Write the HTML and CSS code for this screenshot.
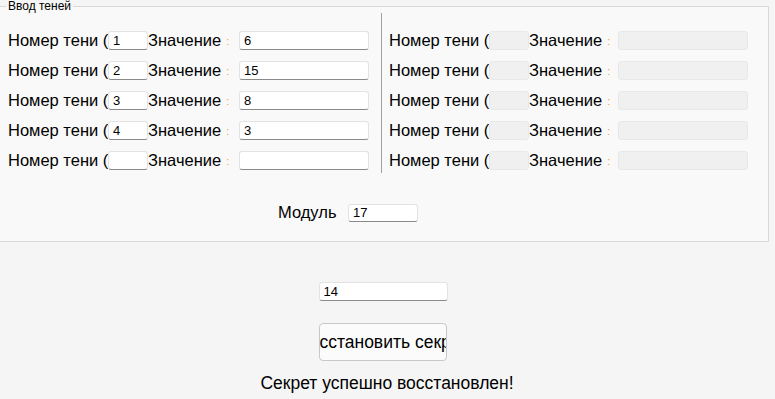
FILE: index.html
```html
<!DOCTYPE html>
<html lang="ru">

<head>
    <meta charset="UTF-8">
    <meta name="viewport" content="width=device-width, initial-scale=1.0">
    <title>Восстановление секрета</title>
    <link rel="stylesheet" href="styles.css">
</head>

<body>
    <fieldset class="shadows">
        <legend>Ввод теней</legend>

        <div class="columns">
            <div class="column">
                <div class="row">
                    <span class="label">Номер тени (</span>
                    <input type="text" class="textBox small" value="1">
                    <span class="label value">Значение<span class="colon">:</span></span>
                    <input type="text" class="textBox wide" value="6">
                </div>
                <div class="row">
                    <span class="label">Номер тени (</span>
                    <input type="text" class="textBox small" value="2">
                    <span class="label value">Значение<span class="colon">:</span></span>
                    <input type="text" class="textBox wide" value="15">
                </div>
                <div class="row">
                    <span class="label">Номер тени (</span>
                    <input type="text" class="textBox small" value="3">
                    <span class="label value">Значение<span class="colon">:</span></span>
                    <input type="text" class="textBox wide" value="8">
                </div>
                <div class="row">
                    <span class="label">Номер тени (</span>
                    <input type="text" class="textBox small" value="4">
                    <span class="label value">Значение<span class="colon">:</span></span>
                    <input type="text" class="textBox wide" value="3">
                </div>
                <div class="row">
                    <span class="label">Номер тени (</span>
                    <input type="text" class="textBox small" value="">
                    <span class="label value">Значение<span class="colon">:</span></span>
                    <input type="text" class="textBox wide" value="">
                </div>
            </div>

            <div class="column right">
                <div class="row">
                    <span class="label">Номер тени (</span>
                    <input type="text" class="textBox small" disabled>
                    <span class="label value">Значение<span class="colon">:</span></span>
                    <input type="text" class="textBox wide" disabled>
                </div>
                <div class="row">
                    <span class="label">Номер тени (</span>
                    <input type="text" class="textBox small" disabled>
                    <span class="label value">Значение<span class="colon">:</span></span>
                    <input type="text" class="textBox wide" disabled>
                </div>
                <div class="row">
                    <span class="label">Номер тени (</span>
                    <input type="text" class="textBox small" disabled>
                    <span class="label value">Значение<span class="colon">:</span></span>
                    <input type="text" class="textBox wide" disabled>
                </div>
                <div class="row">
                    <span class="label">Номер тени (</span>
                    <input type="text" class="textBox small" disabled>
                    <span class="label value">Значение<span class="colon">:</span></span>
                    <input type="text" class="textBox wide" disabled>
                </div>
                <div class="row">
                    <span class="label">Номер тени (</span>
                    <input type="text" class="textBox small" disabled>
                    <span class="label value">Значение<span class="colon">:</span></span>
                    <input type="text" class="textBox wide" disabled>
                </div>
            </div>
        </div>

        <div class="moduleRow">
            <span class="label moduleLabel">Модуль</span>
            <input type="text" class="textBox module" value="17">
        </div>
    </fieldset>

    <div class="restore">
        <input type="text" class="textBox result" value="14">
        <button class="btn"><span>Восстановить секрет</span></button>
        <div class="status">Секрет успешно восстановлен!</div>
    </div>
</body>

</html>
```

FILE: styles.css
```css
body {
    margin: 0;
    background-color: #f5f5f5;
    font-family: "Liberation Sans", Arial, sans-serif;
    color: #000;
    overflow: hidden;
}

.shadows {
    margin: 0 6px 0 0;
    padding: 0 0 19px 0;
    border: 1px solid #d9d9d9;
    border-left: none;
    background-color: #f9f9f9;
}

.shadows legend {
    margin-left: 6px;
    padding: 0 2px;
    font-size: 12px;
    line-height: 12px;
}

.columns {
    display: flex;
    margin-top: 1px;
}

.column {
    display: flex;
    flex-direction: column;
    gap: 11px;
    padding: 18px 12px 3px 8px;
}

.column.right {
    border-left: 1px solid #a0a0a0;
    padding-left: 7px;
}

.row {
    display: flex;
    align-items: center;
    height: 19px;
}

.label {
    font-size: 16.5px;
    white-space: nowrap;
}

.row .label:first-child {
    width: 100px;
}

.value {
    width: 91px;
    display: flex;
    align-items: center;
}

.right .value {
    width: 89px;
}

.colon {
    margin-left: 5px;
    font-size: 11px;
    color: #f5a030;
}

.textBox {
    box-sizing: border-box;
    height: 19px;
    padding: 0 4px;
    border: 1px solid #e3e3e3;
    border-bottom-color: #8a8a8a;
    border-radius: 3px;
    background-color: #fff;
    font-family: "Liberation Sans", Arial, sans-serif;
    font-size: 13px;
    color: #000;
    outline: none;
}

.textBox:disabled {
    background-color: #f0f0f0;
    border-color: #e8e8e8;
}

.small {
    width: 40px;
}

.wide {
    width: 130px;
}

.moduleRow {
    display: flex;
    align-items: center;
    padding: 30px 0 0 278px;
}

.moduleLabel {
    width: 70px;
}

.module {
    width: 70px;
    height: 18px;
}

.restore {
    display: flex;
    flex-direction: column;
    align-items: center;
    width: 765px;
    padding-top: 40px;
}

.result {
    width: 129px;
    margin-left: 1px;
}

.btn {
    display: flex;
    justify-content: center;
    align-items: center;
    box-sizing: border-box;
    width: 128px;
    height: 38px;
    margin: 22px 0 0 1px;
    padding: 0;
    overflow: hidden;
    white-space: nowrap;
    border: 1px solid #c8c8c8;
    border-radius: 4px;
    background-color: #fbfbfb;
    font-family: inherit;
    font-size: 17.5px;
    color: #000;
    cursor: pointer;
}

.status {
    margin: 12px 0 0 9px;
    font-size: 17.5px;
    white-space: nowrap;
}
```
